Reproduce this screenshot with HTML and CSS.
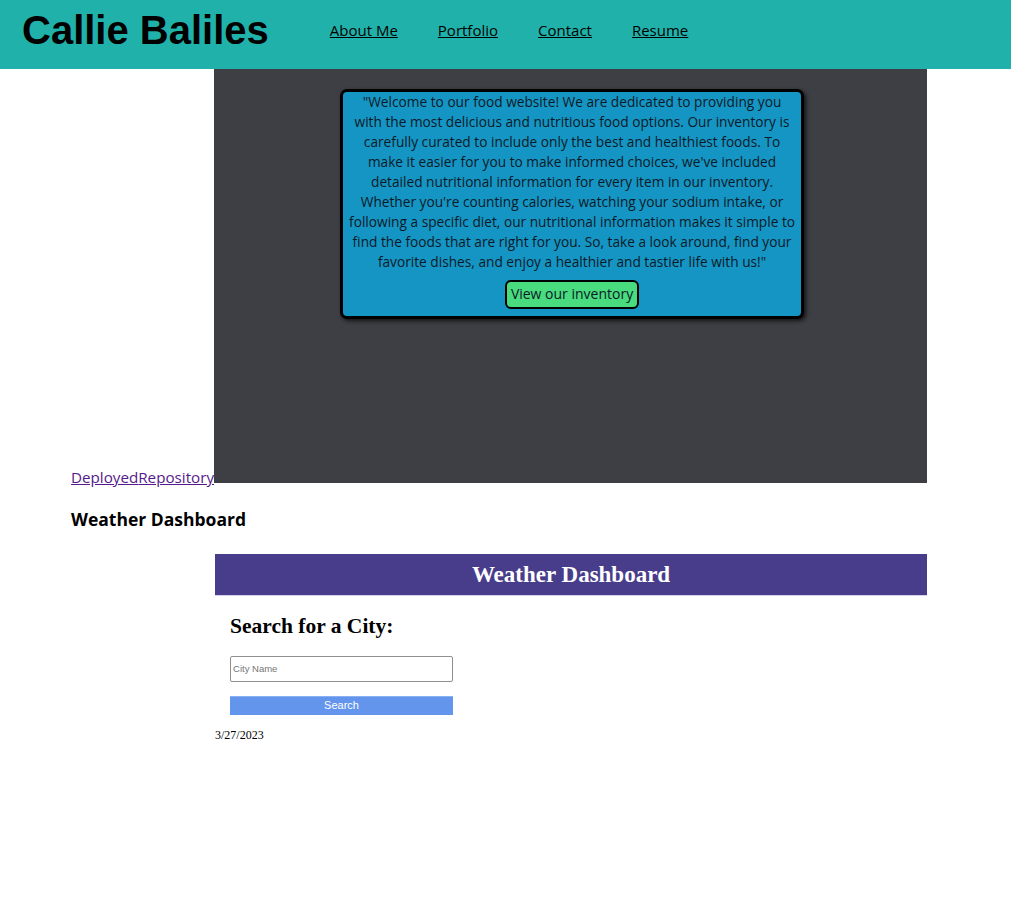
FILE: index.html
```html
<!DOCTYPE html>
<html lang="en">
<head>
<meta charset="utf-8">
<title>Callie Baliles</title>
<link rel="stylesheet" href="styles.css">
</head>
<body>
<header class="site-header">
  <h1 class="brand">Callie Baliles</h1>
  <nav class="nav">
    <a href="#about">About Me</a>
    <a href="#portfolio">Portfolio</a>
    <a href="#contact">Contact</a>
    <a href="#resume">Resume</a>
  </nav>
</header>
<main class="portfolio">
  <section class="project">
    <div class="project-row"><a class="proj-link" href="#">Deployed</a><a class="proj-link" href="#">Repository</a><div class="shot"><div class="shot-food">
        <div class="food-card">
          <p class="food-text">"Welcome to our food website! We are dedicated to providing you<br>with the most delicious and nutritious food options. Our inventory is<br>carefully curated to include only the best and healthiest foods. To<br>make it easier for you to make informed choices, we've included<br>detailed nutritional information for every item in our inventory.<br>Whether you're counting calories, watching your sodium intake, or<br>following a specific diet, our nutritional information makes it simple to<br>find the foods that are right for you. So, take a look around, find your<br>favorite dishes, and enjoy a healthier and tastier life with us!"</p>
          <span class="food-btn">View our inventory</span>
        </div>
      </div></div></div>
  </section>
  <section class="project">
    <h3 class="project-title">Weather Dashboard</h3>
    <div class="project-row"><a class="proj-link" href="#">Deployed</a><a class="proj-link" href="#">Repository</a><div class="shot shot-weather">
        <div class="wd-bar">Weather Dashboard</div>
        <div class="wd-search">
          <h2 class="wd-search-title">Search for a City:</h2>
          <div class="wd-input">City Name</div>
          <div class="wd-btn">Search</div>
        </div>
        <div class="wd-date">3/27/2023</div>
      </div></div>
  </section>
</main>
</body>
</html>
```

FILE: styles.css
```css
html, body {
  margin: 0;
  padding: 0;
  background: #ffffff;
}

body {
  font-family: "Open Sans", "Noto Sans", sans-serif;
  color: #000;
}

.site-header {
  display: flex;
  align-items: center;
  height: 60px;
  padding: 0 0 9px 22px;
  background: #20b2aa;
}

.brand {
  margin: 0 61px 0 0;
  font-family: "Liberation Sans", Arial, sans-serif;
  font-size: 40px;
  font-weight: bold;
  line-height: 1;
}

.nav {
  display: flex;
  gap: 40px;
}

.nav a {
  color: #000;
  font-size: 15px;
  text-decoration: underline;
}

.portfolio {
  padding: 0;
}

.project-row {
  padding-left: 71px;
  font-size: 15.2px;
  line-height: 1.2;
}

.proj-link {
  color: #551a8b;
}

.shot {
  display: inline-block;
  vertical-align: baseline;
  overflow: hidden;
  width: 713px;
  height: 414px;
}

.shot-food {
  display: flex;
  flex-direction: column;
  align-items: center;
  height: 100%;
  padding-top: 20px;
  box-sizing: border-box;
  background: #3e3f44;
}

.food-card {
  display: flex;
  flex-direction: column;
  align-items: center;
  width: 464px;
  box-sizing: border-box;
  margin-left: 3px;
  padding: 0 0 7px;
  background: #1595c3;
  border: 3px solid #000;
  border-radius: 7px;
  box-shadow: 2px 2px 4px rgba(0, 0, 0, 0.7);
}

.food-text {
  margin: 0;
  font-size: 13.7px;
  line-height: 20px;
  text-align: center;
  white-space: nowrap;
  color: #0c1a28;
}

.food-btn {
  margin-top: 8px;
  padding: 1px 4px;
  height: 23px;
  line-height: 22px;
  font-size: 14px;
  color: #0c1a28;
  background: #48dc7e;
  border: 2px solid #000;
  border-radius: 6px;
}

.project-title {
  margin: 21px 0 23px 71px;
  font-size: 17.5px;
  font-weight: bold;
  line-height: 24px;
}

.shot-weather {
  background: #fff;
  font-family: "Liberation Serif", "Times New Roman", serif;
  margin-left: 1px;
  width: 712px;
}

.wd-bar {
  height: 41px;
  line-height: 41px;
  background: #483d8b;
  border-bottom: 1px solid #d9d4ee;
  color: #fff;
  text-align: center;
  font-size: 23px;
  font-weight: bold;
}

.wd-search {
  padding: 0 0 0 15px;
}

.wd-search-title {
  margin: 17px 0 17px;
  font-size: 21.5px;
  line-height: 26px;
  font-weight: bold;
}

.wd-input {
  width: 223px;
  height: 26px;
  box-sizing: border-box;
  border: 1px solid #8f8f8f;
  border-radius: 2px;
  padding-left: 2px;
  font-family: "Liberation Sans", Arial, sans-serif;
  font-size: 9.5px;
  line-height: 24px;
  color: #757575;
}

.wd-btn {
  width: 223px;
  height: 19px;
  margin-top: 14px;
  background: #6495ed;
  border-top: 1px solid #89b0f3;
  box-sizing: border-box;
  color: #fff;
  text-align: center;
  font-family: "Liberation Sans", Arial, sans-serif;
  font-size: 11px;
  line-height: 17px;
}

.wd-date {
  margin-top: 13px;
  font-size: 12px;
  line-height: 14px;
}
```
